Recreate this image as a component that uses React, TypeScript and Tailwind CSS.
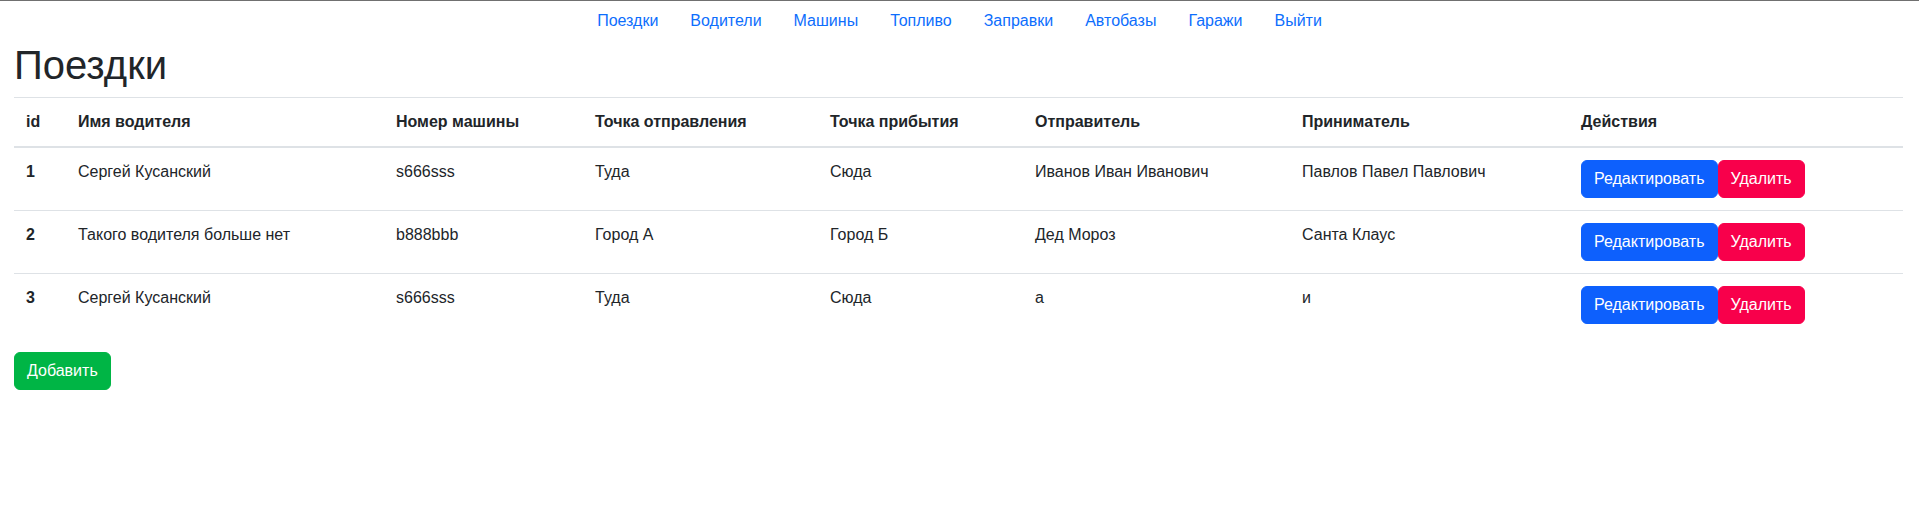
import React from "react";

const rows = [
  { id: 1, driver: "Сергей Кусанский", car: "s666sss", from: "Туда", to: "Сюда", sender: "Иванов Иван Иванович", receiver: "Павлов Павел Павлович" },
  { id: 2, driver: "Такого водителя больше нет", car: "b888bbb", from: "Город А", to: "Город Б", sender: "Дед Мороз", receiver: "Санта Клаус" },
  { id: 3, driver: "Сергей Кусанский", car: "s666sss", from: "Туда", to: "Сюда", sender: "а", receiver: "и" },
];

const links = ["Поездки", "Водители", "Машины", "Топливо", "Заправки", "Автобазы", "Гаражи", "Выйти"];

export default function App() {
  return (
    <div className="min-h-[512px] bg-white text-[#212529] text-base leading-6 border-t border-[#707070]" style={{ fontFamily: '"Liberation Sans", Arial, sans-serif' }}>
      <nav className="flex justify-center">
        {links.map((l) => (
          <a key={l} href="#" className="px-4 py-2 text-[#0d6efd]">
            {l}
          </a>
        ))}
      </nav>
      <div className="pl-[14px] pr-[16px]">
        <h1 className="text-[40px] leading-[48px] font-medium mb-2">Поездки</h1>
        <table className="w-full table-fixed border-collapse mb-4">
          <colgroup>
            <col className="w-[52px]" />
            <col className="w-[318px]" />
            <col className="w-[199px]" />
            <col className="w-[235px]" />
            <col className="w-[205px]" />
            <col className="w-[267px]" />
            <col className="w-[279px]" />
            <col className="w-[334px]" />
          </colgroup>
          <thead>
            <tr>
              {["id", "Имя водителя", "Номер машины", "Точка отправления", "Точка прибытия", "Отправитель", "Приниматель", "Действия"].map((h) => (
                <th key={h} className="p-3 text-left font-bold align-bottom border-t border-b-2 border-[#dee2e6]">
                  {h}
                </th>
              ))}
            </tr>
          </thead>
          <tbody>
            {rows.map((r) => (
              <tr key={r.id}>
                <td className="p-3 align-top font-bold border-t border-[#dee2e6]">{r.id}</td>
                <td className="p-3 align-top border-t border-[#dee2e6]">{r.driver}</td>
                <td className="p-3 align-top border-t border-[#dee2e6]">{r.car}</td>
                <td className="p-3 align-top border-t border-[#dee2e6]">{r.from}</td>
                <td className="p-3 align-top border-t border-[#dee2e6]">{r.to}</td>
                <td className="p-3 align-top border-t border-[#dee2e6]">{r.sender}</td>
                <td className="p-3 align-top border-t border-[#dee2e6]">{r.receiver}</td>
                <td className="p-3 align-top border-t border-[#dee2e6]">
                  <div className="flex">
                    <button className="px-3 py-[6px] border border-[#0d60fd] bg-[#0d60fd] text-white rounded-md leading-6">Редактировать</button>
                    <button className="px-3 py-[6px] border border-[#f8004b] bg-[#f8004b] text-white rounded-md leading-6">Удалить</button>
                  </div>
                </td>
              </tr>
            ))}
          </tbody>
        </table>
        <button className="px-3 py-[6px] border border-[#00b545] bg-[#00b545] text-white rounded-md leading-6">Добавить</button>
      </div>
    </div>
  );
}
